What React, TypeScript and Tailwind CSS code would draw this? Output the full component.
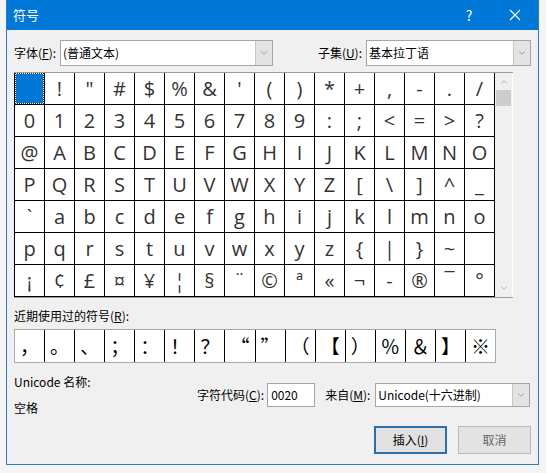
import { ChevronDown, ChevronUp } from "lucide-react";

const ui = { fontFamily: '"Noto Sans CJK SC", "Noto Sans", sans-serif' };
const glyph = { fontFamily: '"Open Sans", "Noto Sans", sans-serif' };

const rows: string[][] = [
  [" ", "!", '"', "#", "$", "%", "&", "'", "(", ")", "*", "+", ",", "-", ".", "/"],
  "0123456789:;<=>?".split(""),
  "@ABCDEFGHIJKLMNO".split(""),
  "PQRSTUVWXYZ[\\]^_".split(""),
  "`abcdefghijklmno".split(""),
  "pqrstuvwxyz{|}~ ".split(""),
  ["¡", "¢", "£", "¤", "¥", "¦", "§", "¨", "©", "ª", "«", "¬", "-", "®", "¯", "°"],
];

const recent = ["，", "。", "、", "；", "：", "！", "？", "“", "”", "（", "【", "）", "％", "＆", "】", "※"];

function Combo({ value, width, height }: { value: string; width: string; height: string }) {
  return (
    <div className={`flex ${width} ${height} border border-[#a5a5a5] bg-white`}>
      <div className="flex-1 flex items-center pl-[2px] text-[12px] text-black">{value}</div>
      <div className="w-[17px] flex items-center justify-center bg-[#e3e3e3] border-l border-[#c6c6c6]">
        <ChevronDown size={10} strokeWidth={1.2} className="text-[#555]" />
      </div>
    </div>
  );
}

export default function App() {
  return (
    <div className="w-[546px] h-[473px] bg-[#f4f4f4] pl-[6px]" style={ui}>
      <div className="w-[533px] h-[465px] bg-[#f0f0f0] border-x border-b border-[#2f7bc2] flex flex-col">
        {/* title bar */}
        <div className="h-[30px] bg-[#0078d7] flex items-center text-white shrink-0">
          <span className="pl-[6px] text-[13px] flex-1">符号</span>
          <div className="w-[46px] h-full flex items-center justify-center text-[14px]">?</div>
          <div className="w-[46px] h-full flex items-center justify-center">
            <svg width="12" height="12" viewBox="0 0 12 12">
              <path d="M1 1L11 11M11 1L1 11" stroke="white" strokeWidth="1.1" />
            </svg>
          </div>
        </div>

        <div className="pl-[7px] pr-[7px] flex flex-col">
          {/* font / subset */}
          <div className="mt-[10px] flex items-center text-[12px]">
            <span className="w-[46px]">
              字体(<span className="underline">F</span>):
            </span>
            <Combo value="(普通文本)" width="w-[213px]" height="h-[26px]" />
            <span className="ml-auto mr-[4px]">
              子集(<span className="underline">U</span>):
            </span>
            <Combo value="基本拉丁语" width="w-[165px]" height="h-[26px]" />
          </div>

          {/* symbol grid */}
          <div className="mt-[6px] flex w-[499px] border-t border-b border-[#9c9c9c] bg-white">
            <div className="flex flex-col border-l border-black" style={glyph}>
              {rows.map((r, ri) => (
                <div key={ri} className="flex">
                  {r.map((c, ci) => (
                    <div
                      key={ci}
                      className="w-[30px] h-[32px] border-r border-b border-black flex items-center justify-center text-[20px] text-[#333] leading-none"
                    >
                      {ri === 0 && ci === 0 ? (
                        <div className="w-[27px] h-[29px] bg-[#0078d7] outline-1 outline-dotted outline-[#333]" />
                      ) : (
                        c
                      )}
                    </div>
                  ))}
                </div>
              ))}
            </div>
            <div className="w-[17px] bg-[#f0f0f0] flex flex-col items-center">
              <ChevronUp size={10} strokeWidth={1.3} className="text-[#777] mt-[4px]" />
              <div className="w-[15px] h-[16px] bg-[#cdcdcd] mt-[3px]" />
              <ChevronDown size={10} strokeWidth={1.3} className="text-[#777] mt-auto mb-[4px]" />
            </div>
          </div>

          {/* recent symbols */}
          <div className="mt-[9px] text-[12px]">
            近期使用过的符号(<span className="underline">R</span>):
          </div>
          <div className="mt-[4px] flex w-[482px] h-[34px] border border-[#a9a9a9] bg-white">
            {recent.map((c, i) => (
              <div
                key={i}
                className={`flex-1 flex items-center justify-center text-[19px] text-black ${
                  i < recent.length - 1 ? "border-r border-black" : ""
                }`}
              >
                {c}
              </div>
            ))}
          </div>

          {/* unicode info */}
          <div className="mt-[10px] flex text-[12px]">
            <div className="w-[183px] flex flex-col gap-[8px]">
              <span>Unicode 名称:</span>
              <span>空格</span>
            </div>
            <div className="flex items-center mt-[10px] self-start">
              <span>
                字符代码(<span className="underline">C</span>):
              </span>
              <div className="ml-[3px] w-[48px] h-[24px] border border-[#a5a5a5] bg-white flex items-center pl-[3px]">
                0020
              </div>
              <span className="ml-[10px]">
                来自(<span className="underline">M</span>):
              </span>
              <div className="ml-[5px]">
                <Combo value="Unicode(十六进制)" width="w-[155px]" height="h-[24px]" />
              </div>
            </div>
          </div>

          {/* buttons */}
          <div className="mt-[9px] flex justify-end gap-[11px] text-[12px]">
            <button className="w-[73px] h-[28px] bg-[#e1e1e1] border-2 border-[#2a6fa8] flex items-center justify-center">
              插入(<span className="underline">I</span>)
            </button>
            <button className="w-[73px] h-[28px] bg-[#e3e3e3] border border-[#b9b9b9] text-[#666] flex items-center justify-center">
              取消
            </button>
          </div>
        </div>
      </div>
    </div>
  );
}
